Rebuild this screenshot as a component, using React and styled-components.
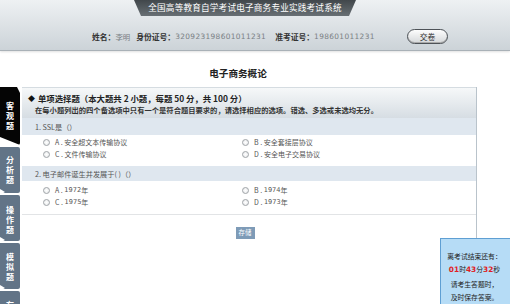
import React from "react";
import styled, { createGlobalStyle } from "styled-components";

const Global = createGlobalStyle`
  html, body { margin: 0; padding: 0; background: #fff; }
  body {
    width: 510px; height: 304px; overflow: hidden;
    font-family: "DejaVu Sans", "Noto Sans CJK SC", sans-serif;
  }
  #root { position: relative; width: 510px; height: 304px; }
`;

const CJK = `"Noto Sans CJK SC", "DejaVu Sans", sans-serif`;

const Page = styled.div`
  position: relative;
  width: 510px;
  height: 304px;
  overflow: hidden;
`;

const Header = styled.header`
  height: 50px;
  background: linear-gradient(#eef1f3, #ccd3d8);
  border-bottom: 1px solid #a9b1b7;
  box-shadow: 0 1px 2px rgba(0, 0, 0, 0.12);
  display: flex;
  flex-direction: column;
`;

const Banner = styled.div`
  margin-left: 134px;
  width: 222px;
  height: 16px;
  background: linear-gradient(#41474b, #686f74);
  clip-path: polygon(0 0, 100% 0, calc(100% - 7px) 100%, 7px 100%);
  color: #fff;
  font-family: ${CJK};
  font-size: 8.6px;
  line-height: 15px;
  text-align: center;
  letter-spacing: 0.2px;
`;

const InfoRow = styled.div`
  margin-top: 13px;
  height: 15px;
  display: flex;
  align-items: center;
  padding-left: 92px;
`;

const Label = styled.span`
  font-family: ${CJK};
  font-weight: 700;
  font-size: 7.8px;
  color: #333;
  margin-left: ${(p) => p.$gap || 0}px;
`;

const Value = styled.span`
  font-family: ${(p) => (p.$cjk ? CJK : `"DejaVu Sans", sans-serif`)};
  font-size: 7.4px;
  color: #7a7f84;
  letter-spacing: ${(p) => (p.$cjk ? "0" : "0.35px")};
`;

const SubmitButton = styled.button`
  margin-left: auto;
  margin-right: 62px;
  width: 41px;
  height: 15px;
  padding: 0;
  border: 1px solid #4d5257;
  border-radius: 8px;
  background: linear-gradient(#fdfdfd, #d5d8da);
  box-shadow: inset 0 -1px 0 #aaa;
  font-family: ${CJK};
  font-size: 7.8px;
  color: #333;
  line-height: 13px;
`;

const Title = styled.h1`
  margin: 15px 0 7px;
  width: 476px;
  height: 14px;
  line-height: 14px;
  text-align: center;
  font-family: ${CJK};
  font-size: 9.6px;
  font-weight: 700;
  color: #222;
`;

const Body = styled.div`
  display: flex;
  align-items: flex-start;
`;

const Tabs = styled.nav`
  width: 20px;
  flex: none;
  display: flex;
  flex-direction: column;
  gap: 2px;
`;

const Tab = styled.div`
  position: relative;
  width: 20px;
  height: ${(p) => p.$h}px;
  background: ${(p) => (p.$active ? "#050505" : "#627487")};
  padding-top: ${(p) => p.$pt}px;
  box-sizing: border-box;
  border-radius: 0 2px 2px 0;
  clip-path: ${(p) =>
    p.$active
      ? "polygon(0 0, 85% 0, 100% 6px, 100% 100%, 0 calc(100% - 8px))"
      : "none"};
  &::after {
    content: "";
    display: ${(p) => (p.$active ? "none" : "block")};
    position: absolute;
    left: 0;
    bottom: -2px;
    width: 0;
    height: 0;
    border-top: 3px solid transparent;
    border-bottom: 3px solid transparent;
    border-left: 5px solid #fff;
  }
`;

const TabChar = styled.span`
  display: block;
  height: 10px;
  line-height: 10px;
  text-align: center;
  color: #fff;
  font-family: ${CJK};
  font-weight: 700;
  font-size: 8px;
`;

const Panel = styled.main`
  margin-left: 2px;
  width: 455px;
  height: 240px;
  border-right: 1px solid #b9c3cb;
  box-sizing: border-box;
`;

const SectionHead = styled.div`
  height: 31px;
  background: linear-gradient(#f6f8f9, #d6dde3);
  border-top: 1px solid #d5dce1;
  box-sizing: border-box;
  font-family: ${CJK};
  color: #222;
  padding-top: 5px;
`;

const SectionTitle = styled.div`
  padding-left: 6px;
  font-size: 8.4px;
  font-weight: 700;
  line-height: 11px;
  display: flex;
  align-items: center;
  gap: 3px;
  white-space: pre;
`;

const Diamond = styled.span`
  font-size: 7px;
  color: #111;
`;

const SectionNote = styled.div`
  padding-left: 13px;
  font-size: 7.3px;
  font-weight: 700;
  line-height: 12px;
  color: #333;
  white-space: nowrap;
`;

const QuestionRow = styled.div`
  height: ${(p) => p.$h}px;
  background: #dfe7ef;
  padding-left: 13px;
  display: flex;
  align-items: center;
  font-family: ${CJK};
  font-size: 7.2px;
  color: #555;
`;

const Options = styled.div`
  display: grid;
  grid-template-columns: 199px 1fr;
  grid-auto-rows: 12px;
  padding: ${(p) => p.$pad};
  padding-left: 21px;
`;

const Option = styled.label`
  display: flex;
  align-items: center;
  font-family: ${CJK};
  font-size: 7px;
  color: #555;
  white-space: nowrap;
`;

const Radio = styled.span`
  width: 5px;
  height: 5px;
  border-radius: 50%;
  border: 1px solid #a0a4a8;
  background: radial-gradient(#fff, #e6e8ea);
  margin-right: 5px;
  flex: none;
`;

const Num = styled.span`
  font-family: "DejaVu Sans", sans-serif;
  font-size: 6.6px;
`;

const Divider = styled.hr`
  margin: 0;
  border: 0;
  border-top: 1px solid #e2e4e6;
`;

const SaveRow = styled.div`
  display: flex;
  justify-content: center;
  padding: 12px 8px 0 0;
`;

const SaveButton = styled.button`
  width: 19px;
  height: 12px;
  padding: 0;
  border: 0;
  background: #7e9bb7;
  color: #fff;
  font-family: ${CJK};
  font-size: 6.4px;
  line-height: 12px;
`;

const Timer = styled.aside`
  position: absolute;
  left: 440px;
  top: 238px;
  width: 72px;
  height: 68px;
  box-sizing: border-box;
  background: #b6dcf6;
  border: 1px solid #5f9fd3;
  font-family: ${CJK};
  font-size: 6.8px;
  color: #222;
  text-align: center;
  padding-top: 11px;
  padding-right: 3px;
  line-height: 13px;
`;

const Red = styled.b`
  color: #e01e24;
  font-family: "DejaVu Sans", sans-serif;
  font-size: 7.4px;
`;

const TimerNote = styled.div`
  margin-top: 2px;
  line-height: 13px;
`;

const tabs = [
  { chars: ["客", "观", "题"], h: 58, pt: 14, active: true },
  { chars: ["分", "析", "题"], h: 46, pt: 8 },
  { chars: ["操", "作", "题"], h: 46, pt: 10 },
  { chars: ["模", "拟", "题"], h: 46, pt: 9 },
  { chars: ["存"], h: 30, pt: 9 },
];

const questions = [
  {
    q: "1. SSL是（）",
    opts: [
      ["A", "安全超文本传输协议"],
      ["B", "安全套接层协议"],
      ["C", "文件传输协议"],
      ["D", "安全电子交易协议"],
    ],
  },
  {
    q: "2. 电子邮件诞生并发展于( )（）",
    opts: [
      ["A", "1972年"],
      ["B", "1974年"],
      ["C", "1975年"],
      ["D", "1973年"],
    ],
  },
];

function OptionText({ text }) {
  const m = text.match(/^(\d+)(年)$/);
  if (m)
    return (
      <>
        <Num>{m[1]}</Num>
        {m[2]}
      </>
    );
  return text;
}

export default function App() {
  return (
    <Page>
      <Global />
      <Header>
        <Banner>全国高等教育自学考试电子商务专业实践考试系统</Banner>
        <InfoRow>
          <Label>姓名：</Label>
          <Value $cjk>李明</Value>
          <Label $gap={6}>身份证号：</Label>
          <Value>320923198601011231</Value>
          <Label $gap={9}>准考证号：</Label>
          <Value>198601011231</Value>
          <SubmitButton>交卷</SubmitButton>
        </InfoRow>
      </Header>
      <Title>电子商务概论</Title>
      <Body>
        <Tabs>
          {tabs.map((t, i) => (
            <Tab key={i} $h={t.h} $pt={t.pt} $active={t.active}>
              {t.chars.map((c, j) => (
                <TabChar key={j}>{c}</TabChar>
              ))}
            </Tab>
          ))}
        </Tabs>
        <Panel>
          <SectionHead>
            <SectionTitle>
              <Diamond>◆</Diamond>
              单项选择题（本大题共 2 小题，每题 50 分，共 100 分）
            </SectionTitle>
            <SectionNote>
              在每小题列出的四个备选项中只有一个是符合题目要求的，请选择相应的选项。错选、多选或未选均无分。
            </SectionNote>
          </SectionHead>
          {questions.map((qq, i) => (
            <React.Fragment key={i}>
              <QuestionRow $h={i === 0 ? 17 : 15}>{qq.q}</QuestionRow>
              <Options $pad={i === 0 ? "1px 0 6px" : "3px 0 6px"}>
                {qq.opts.map(([k, v]) => (
                  <Option key={k}>
                    <Radio />
                    {k} .&nbsp;
                    <OptionText text={v} />
                  </Option>
                ))}
              </Options>
            </React.Fragment>
          ))}
          <Divider />
          <SaveRow>
            <SaveButton>存储</SaveButton>
          </SaveRow>
        </Panel>
      </Body>
      <Timer>
        <div>离考试结束还有：</div>
        <div>
          <Red>01</Red>时<Red>43</Red>分<Red>32</Red>秒
        </div>
        <TimerNote>
          请考生答题时，
          <br />
          及时保存答案。
        </TimerNote>
      </Timer>
    </Page>
  );
}
